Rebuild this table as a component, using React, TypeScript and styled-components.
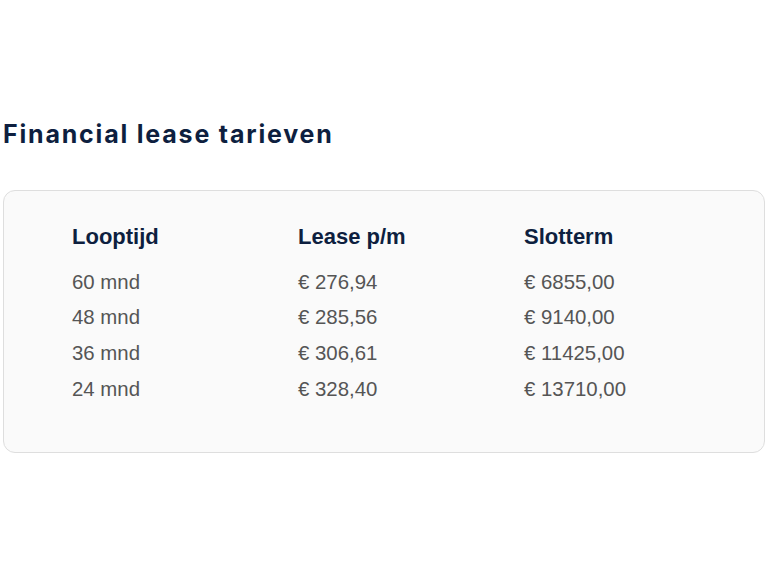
import React from "react";
import styled, { createGlobalStyle } from "styled-components";

const Global = createGlobalStyle`
  html, body { margin: 0; padding: 0; background: #ffffff; }
  body { width: 768px; height: 576px; overflow: hidden; }
`;

const Page = styled.div`
  padding: 117px 4px 0 3px;
`;

const Title = styled.h2`
  margin: 0 0 39px 0;
  font-family: "Inter", "Liberation Sans", sans-serif;
  font-weight: 700;
  font-size: 25px;
  line-height: 34px;
  letter-spacing: 1.8px;
  color: #0e1f3f;
`;

const Card = styled.div`
  box-sizing: border-box;
  width: 762px;
  height: 263px;
  border: 1px solid #dedede;
  border-radius: 12px;
  background: #fafafa;
  padding: 31px 0 0 68px;
`;

const Grid = styled.div`
  display: grid;
  grid-template-columns: 226px 226px 226px;
`;

const Head = styled.div`
  font-family: "Liberation Sans", Arial, sans-serif;
  font-weight: 700;
  font-size: 22px;
  line-height: 30px;
  color: #0e1f3f;
  padding-bottom: 12.5px;
`;

const Cell = styled.div`
  font-family: "Liberation Sans", Arial, sans-serif;
  font-size: 20.4px;
  line-height: 35.7px;
  color: #555555;
`;

const rows = [
  ["60 mnd", "€ 276,94", "€ 6855,00"],
  ["48 mnd", "€ 285,56", "€ 9140,00"],
  ["36 mnd", "€ 306,61", "€ 11425,00"],
  ["24 mnd", "€ 328,40", "€ 13710,00"],
];

export default function App() {
  return (
    <>
      <Global />
      <Page>
        <Title>Financial lease tarieven</Title>
        <Card>
          <Grid>
            <Head>Looptijd</Head>
            <Head>Lease p/m</Head>
            <Head>Slotterm</Head>
            {rows.map((r) =>
              r.map((c, i) => <Cell key={r[0] + i}>{c}</Cell>)
            )}
          </Grid>
        </Card>
      </Page>
    </>
  );
}
